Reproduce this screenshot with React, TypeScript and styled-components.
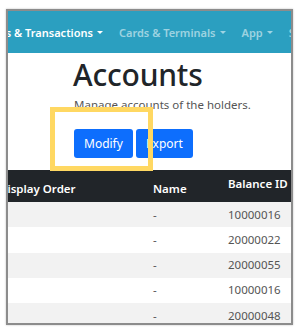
import styled, { createGlobalStyle } from 'styled-components';

const GlobalStyle = createGlobalStyle`
  html, body {
    margin: 0;
    padding: 0;
    background: #ffffff;
    font-family: "Noto Sans", "Open Sans", sans-serif;
  }
`;

const Page = styled.div`
  width: 300px;
  height: 331px;
  padding: 9px 0 0 6px;
  box-sizing: border-box;
`;

const Frame = styled.div`
  position: relative;
  width: 287px;
  height: 316px;
  border: 2px solid #8c8c8c;
  box-sizing: border-box;
  overflow: hidden;
  background: #ffffff;
  box-shadow: 0 0 2px rgba(0, 0, 0, 0.25);
`;

const Navbar = styled.nav`
  height: 42px;
  background: #2b9fc0;
  display: flex;
  align-items: center;
  white-space: nowrap;
`;

const NavLink = styled.span<{ $active?: boolean; $offset?: number }>`
  display: inline-flex;
  align-items: center;
  flex-shrink: 0;
  font-size: 11px;
  font-weight: 600;
  color: ${(p) => (p.$active ? '#ffffff' : 'rgba(255, 255, 255, 0.55)')};
  margin-left: ${(p) => p.$offset ?? 0}px;
  margin-right: 16px;

  &::after {
    content: '';
    margin-left: 4px;
    border-top: 3.5px solid currentColor;
    border-left: 3px solid transparent;
    border-right: 3px solid transparent;
  }
`;

const Header = styled.header`
  padding: 2px 0 0 65px;
  height: 117px;
  box-sizing: border-box;
`;

const Title = styled.h1`
  margin: 0;
  font-size: 30px;
  font-weight: 500;
  color: #212529;
  line-height: 40px;
  letter-spacing: -0.2px;
`;

const Subtitle = styled.p`
  margin: 2px 0 0 1px;
  font-size: 11.5px;
  color: #555555;
  line-height: 16px;
`;

const Actions = styled.div`
  display: flex;
  gap: 3px;
  margin: 16px 0 0 1px;
`;

const Button = styled.button`
  height: 29px;
  padding: 0 10px;
  border: none;
  border-radius: 3px;
  background: #0d6efd;
  color: #ffffff;
  font-family: inherit;
  font-size: 12px;
`;

const Highlight = styled.div`
  position: absolute;
  left: 42px;
  top: 96px;
  width: 103px;
  height: 64px;
  border: 5px solid #ffd862;
  box-sizing: border-box;
  z-index: 2;
`;

const Table = styled.table`
  border-collapse: collapse;
  margin-left: -17px;
  table-layout: fixed;
  width: 340px;
  font-size: 11.5px;
`;

const HeadCell = styled.th<{ $width: number; $lift?: boolean }>`
  box-sizing: border-box;
  width: ${(p) => p.$width}px;
  height: 32px;
  padding: 0 8px ${(p) => (p.$lift ? 4 : 0)}px;
  background: #212529;
  color: #ffffff;
  font-weight: 600;
  line-height: 16px;
  text-align: left;
  vertical-align: middle;
  padding-top: ${(p) => (p.$lift ? 0 : 6)}px;
  white-space: nowrap;
`;

const Row = styled.tr<{ $striped?: boolean }>`
  height: 25.25px;
  background: ${(p) => (p.$striped ? '#f2f2f2' : '#ffffff')};
`;

const Cell = styled.td`
  padding: 0 8px;
  color: #555555;
  line-height: 16px;
  vertical-align: middle;
  white-space: nowrap;
`;

const rows = ['10000016', '20000022', '20000055', '10000016', '20000048'];

export default function App() {
  return (
    <Page>
      <GlobalStyle />
      <Frame>
        <Navbar>
          <NavLink $active $offset={-46}>Accounts &amp; Transactions</NavLink>
          <NavLink>Cards &amp; Terminals</NavLink>
          <NavLink>App</NavLink>
          <NavLink>Settings</NavLink>
        </Navbar>
        <Header>
          <Title>Accounts</Title>
          <Subtitle>Manage accounts of the holders.</Subtitle>
          <Actions>
            <Button>Modify</Button>
            <Button>Export</Button>
          </Actions>
        </Header>
        <Highlight />
        <Table>
          <thead>
            <tr>
              <HeadCell $width={154}>Display Order</HeadCell>
              <HeadCell $width={75}>Name</HeadCell>
              <HeadCell $width={111} $lift>Balance ID</HeadCell>
            </tr>
          </thead>
          <tbody>
            {rows.map((id, i) => (
              <Row key={i} $striped={i % 2 === 0}>
                <Cell />
                <Cell>-</Cell>
                <Cell>{id}</Cell>
              </Row>
            ))}
          </tbody>
        </Table>
      </Frame>
    </Page>
  );
}
